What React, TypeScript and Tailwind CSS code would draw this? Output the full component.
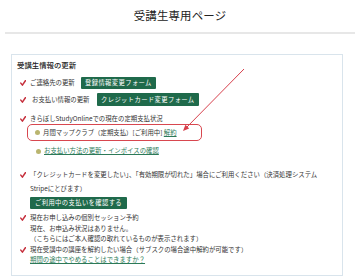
import type { ReactNode } from 'react'

const font = { fontFamily: '"Noto Sans CJK JP", "Noto Sans", sans-serif' }

function Check() {
    return (
        <svg className="h-[6px] w-[6px] shrink-0" viewBox="0 0 6 6" fill="none">
            <path d="M0.8 3.1 2.4 5.1 5.4 0.7" stroke="#c62f3c" strokeWidth="1.5" strokeLinecap="round" strokeLinejoin="round" />
        </svg>
    )
}

function GreenButton({ children, className = '' }: { children: ReactNode; className?: string }) {
    return (
        <span className={`inline-flex items-center rounded-[1px] bg-[#1f6a4b] px-[4px] text-[6.3px] tracking-[0.4px] text-white ${className}`}>
            {children}
        </span>
    )
}

function Dot() {
    return <span className="h-[5px] w-[5px] shrink-0 rounded-full bg-[#bab56f]" />
}

export default function App() {
    return (
        <div className="relative h-[280px] w-[360px] overflow-hidden bg-white text-[#333]" style={font}>
            {/* タイトル */}
            <div className="flex h-[32px] items-center justify-center text-[11.4px] tracking-[0.2px] text-[#222]">
                受講生専用ページ
            </div>
            <div className="mx-[5px] h-[2px] bg-[#e7e7e7]" />

            {/* 受講生情報ボックス */}
            <div className="ml-[11px] mt-[20px] w-[332px] border border-[#d9e4ec] pb-[9px] pl-[5px] text-[6.4px]">
                <div className="mt-[5px] h-[10px] text-[7.4px] font-medium leading-[10px] text-[#222]">受講生情報の更新</div>

                <div className="pl-[3px]">
                    <div className="mt-[7px] flex h-[12px] items-center">
                        <Check />
                        <span className="ml-[4px] w-[51px]">ご連絡先の更新</span>
                        <GreenButton className="h-[12px]">登録情報変更フォーム</GreenButton>
                    </div>

                    <div className="mt-[4px] flex h-[13px] items-center">
                        <Check />
                        <span className="ml-[6px] w-[65px]">お支払い情報の更新</span>
                        <GreenButton className="h-[13px] tracking-[0.2px]">クレジットカード変更フォーム</GreenButton>
                    </div>

                    <div className="mt-[8px] flex h-[10px] items-center">
                        <Check />
                        <span className="ml-[4px]">きらぼしStudyOnlineでの現在の定期支払状況</span>
                    </div>

                    <div className="ml-[7px] flex h-[17px] w-[175px] items-center gap-[3px] rounded-[5px] border-[1.5px] border-[#d8474f] pl-[7px]">
                        <Dot />
                        <span>
                            月間マップクラブ（定期支払）[ご利用中] <span className="text-[#2c7a58] underline">解約</span>
                        </span>
                    </div>

                    <div className="ml-[16px] mt-[5px] flex h-[10px] items-center gap-[3px]">
                        <Dot />
                        <span className="text-[#2c7a58] underline">お支払い方法の更新・インボイスの確認</span>
                    </div>

                    <div className="mt-[12px] flex">
                        <div className="flex h-[14px] items-center">
                            <Check />
                        </div>
                        <div className="ml-[4px] leading-[14px]">
                            「クレジットカードを変更したい」、「有効期限が切れた」場合にご利用ください（決済処理システム
                            <br />
                            Stripeにとびます）
                        </div>
                    </div>
                    <div className="ml-[10px] mt-[1px]">
                        <GreenButton className="h-[12px] px-[5px]">ご利用中の支払いを確認する</GreenButton>
                    </div>

                    <div className="mt-[4px] flex">
                        <div className="flex h-[10.5px] items-center">
                            <Check />
                        </div>
                        <div className="ml-[4px] leading-[10.5px]">
                            現在お申し込みの個別セッション予約
                            <br />
                            現在、お申込み状況はありません。
                            <br />
                            （こちらにはご本人確認の取れているものが表示されます）
                        </div>
                    </div>

                    <div className="flex">
                        <div className="flex h-[10.5px] items-center">
                            <Check />
                        </div>
                        <div className="ml-[4px] leading-[10.5px]">
                            現在受講中の講座を解約したい場合（サブスクの場合途中解約が可能です）
                            <br />
                            <span className="text-[#2c7a58] underline">期間の途中でやめることはできますか？</span>
                        </div>
                    </div>
                </div>
            </div>

            {/* 注記の矢印 */}
            <svg className="pointer-events-none absolute left-0 top-0" width="360" height="280" viewBox="0 0 360 280">
                <line x1="244" y1="69" x2="186" y2="128" stroke="#d7404c" strokeWidth="1" />
                <polygon points="183,131 189.2,128.6 185.4,124.8" fill="#d7404c" />
            </svg>
        </div>
    )
}
